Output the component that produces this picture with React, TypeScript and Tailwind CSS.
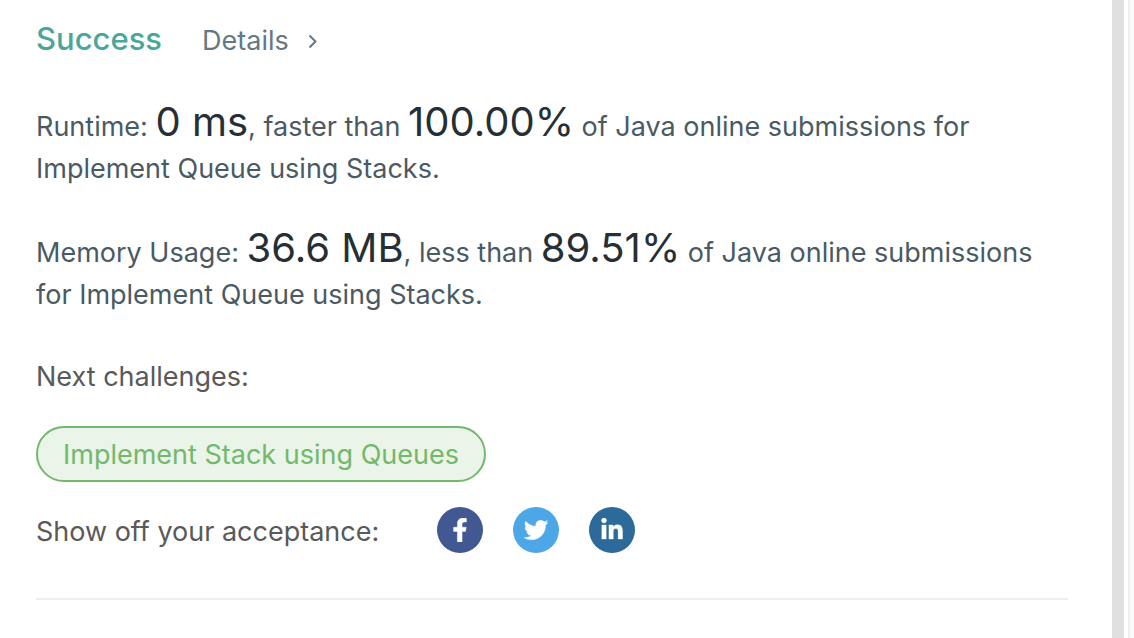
import { FaFacebookF, FaTwitter, FaLinkedinIn } from "react-icons/fa";

const shareLinks = [
  { name: "Facebook", href: "#facebook", color: "bg-[#415893]", Icon: FaFacebookF },
  { name: "Twitter", href: "#twitter", color: "bg-[#4da7e6]", Icon: FaTwitter },
  { name: "LinkedIn", href: "#linkedin", color: "bg-[#2b6a99]", Icon: FaLinkedinIn },
];

function Figure({ children }: { children: string }) {
  return <span className="text-[40px] leading-8 text-[#262f35]">{children}</span>;
}

export default function App() {
  return (
    <div className="flex min-h-screen bg-white font-['Inter',sans-serif] text-[27px] leading-[42px] text-[#4a5a63]">
      <main className="min-w-0 flex-1 pt-[18px] pr-11 pl-9">
        <header className="flex items-baseline gap-10">
          <h1 className="text-[31px] font-medium text-[#4ba69a]">Success</h1>
          <a href="#details" className="flex items-center gap-4 text-[#657883]">
            Details
            <svg aria-hidden="true" viewBox="0 0 16 16" className="size-4 fill-none stroke-current stroke-2">
              <path d="M4.5 2.5l6 6-6 6" />
            </svg>
          </a>
        </header>
        <p className="mt-11">
          Runtime: <Figure>0 ms</Figure>, faster than <Figure>100.00%</Figure> of Java online submissions for Implement Queue using Stacks.
        </p>
        <p className="mt-[42px]">
          Memory Usage: <Figure>36.6 MB</Figure>, less than <Figure>89.51%</Figure> of Java online submissions for Implement Queue using Stacks.
        </p>
        <h2 className="mt-10 text-[#595959]">Next challenges:</h2>
        <a href="#next" className="mt-7 flex h-14 w-fit items-center rounded-full border-2 border-[#73b86c] bg-[#eaf4e9] px-[25px] pt-0.5 text-[#73b86c]">
          Implement Stack using Queues
        </a>
        <div className="mt-[25px] flex items-center gap-[58px] border-b-2 border-[#eeeeee] pb-[45px] text-[#595959]">
          <span className="pt-1">Show off your acceptance:</span>
          <nav aria-label="Share" className="flex gap-[30px]">
            {shareLinks.map(({ name, href, color, Icon }) => (
              <a key={name} href={href} aria-label={name} className={`flex size-[46px] items-center justify-center rounded-full text-white ${color}`}>
                <Icon className="size-6 stroke-current stroke-[8]" />
              </a>
            ))}
          </nav>
        </div>
      </main>
      <div className="flex w-[22px] shrink-0">
        <div className="w-3 bg-[#e0e0e0]" />
        <div className="ml-1 flex-1 border-l-2 border-[#eeeeee] bg-[#fafafa]" />
      </div>
    </div>
  );
}
